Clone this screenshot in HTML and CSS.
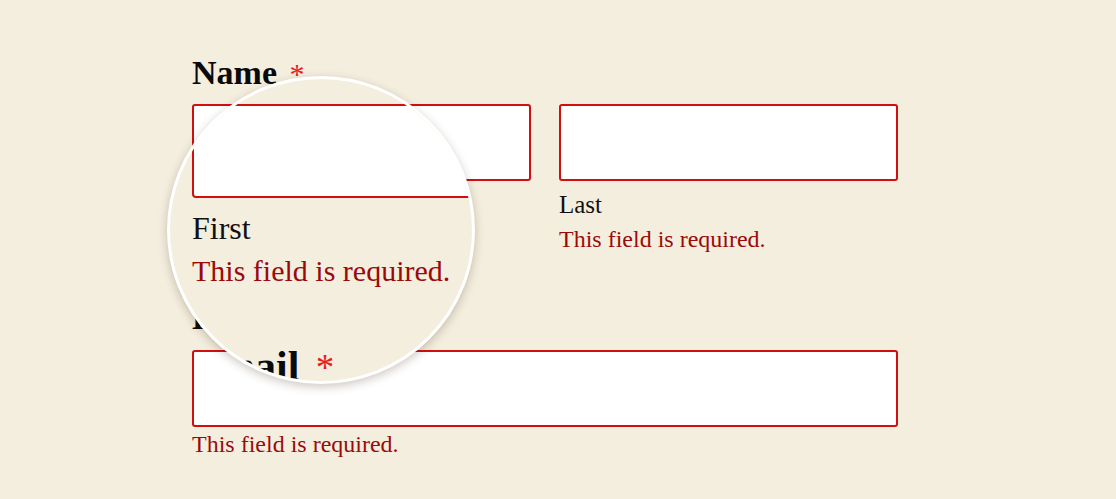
FILE: index.html
```html
<!DOCTYPE html>
<html lang="en">
<head>
<meta charset="utf-8">
<title>Form validation</title>
<link rel="stylesheet" href="styles.css">
</head>
<body>
<form class="form">
  <div class="field">
    <div class="label">Name <span class="req">*</span></div>
    <div class="name-row">
      <div class="sub">
        <div class="input error-input"></div>
        <div class="sublabel">First</div>
        <div class="error">This field is required.</div>
      </div>
      <div class="sub">
        <div class="input error-input"></div>
        <div class="sublabel">Last</div>
        <div class="error">This field is required.</div>
      </div>
    </div>
  </div>
  <div class="field field-email">
    <div class="label">Email <span class="req">*</span></div>
    <div class="input input-wide error-input"></div>
    <div class="error error-tight">This field is required.</div>
  </div>
</form>

<div class="lens" aria-hidden="true">
  <div class="lens-stage">
    <div class="lens-input"></div>
    <div class="lens-sublabel">First</div>
    <div class="lens-error">This field is required.</div>
    <div class="lens-label">Email <span class="req">*</span></div>
  </div>
</div>
</body>
</html>
```

FILE: styles.css
```css
html, body {
  margin: 0;
  padding: 0;
}
body {
  background: #f4eedf;
  font-family: "Liberation Serif", "Times New Roman", serif;
  color: #111;
  width: 1116px;
  height: 499px;
  overflow: hidden;
  position: relative;
}
.form {
  padding: 53px 0 0 192px;
  width: 706px;
}
.label {
  font-size: 34px;
  line-height: 40px;
  height: 40px;
  font-weight: bold;
  color: #0a0a0a;
}
.req {
  color: #ee1c1c;
  font-weight: normal;
  font-size: 30px;
  line-height: 0;
  margin-left: 4px;
}
.name-row {
  display: grid;
  grid-template-columns: 339px 339px;
  column-gap: 28px;
  margin-top: 11px;
}
.input {
  height: 77px;
  box-sizing: border-box;
  background: #fff;
  border-radius: 3px;
}
.error-input {
  border: 2px solid #d10f0f;
}
.input-wide {
  width: 706px;
  margin-top: 12px;
}
.sublabel {
  font-size: 25px;
  line-height: 30px;
  margin-top: 9px;
  color: #111;
}
.error {
  font-size: 24px;
  line-height: 30px;
  margin-top: 4px;
  color: #9b0a0a;
}
.error-tight {
  margin-top: 2px;
}
.field-email {
  margin-top: 44px;
}

/* magnifier overlay */
.lens {
  position: absolute;
  left: 167px;
  top: 76px;
  width: 308px;
  height: 308px;
  box-sizing: border-box;
  border: 3px solid #fff;
  border-radius: 50%;
  overflow: hidden;
  box-shadow: 0 3px 10px rgba(60, 40, 10, 0.25);
  background: #f4eedf;
}
.lens-stage {
  position: relative;
  left: -170px;
  top: -79px;
  width: 1116px;
  padding-top: 104px;
  padding-left: 192px;
  box-sizing: border-box;
}
.lens-input {
  width: 424px;
  height: 94px;
  box-sizing: border-box;
  background: #fff;
  border: 2.5px solid #d10f0f;
  border-radius: 4px;
}
.lens-sublabel {
  font-size: 32px;
  line-height: 40px;
  margin-top: 10px;
  color: #111;
}
.lens-error {
  font-size: 30px;
  line-height: 40px;
  margin-top: 3px;
  color: #9b0a0a;
}
.lens-label {
  font-size: 42px;
  line-height: 50px;
  height: 50px;
  font-weight: bold;
  margin-top: 50px;
  color: #0a0a0a;
}
.lens-label .req {
  font-size: 37px;
  margin-left: 6px;
}
```
